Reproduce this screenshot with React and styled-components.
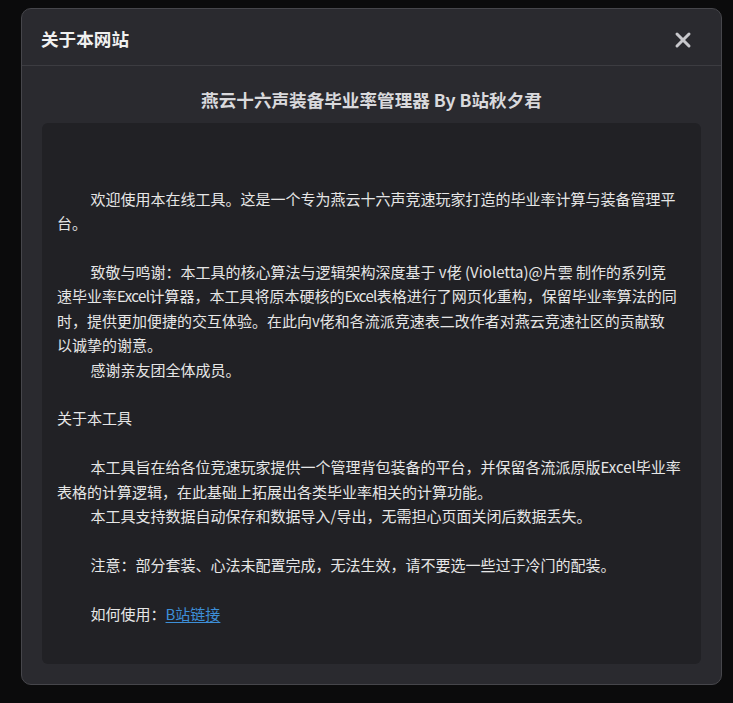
import React from "react";
import styled, { createGlobalStyle } from "styled-components";
import { X } from "lucide-react";

const GlobalStyle = createGlobalStyle`
  html, body {
    margin: 0;
    padding: 0;
    background: #0b0b0c;
  }
  body {
    font-family: "Noto Sans CJK SC", "Noto Sans", sans-serif;
    color: #e6e6e6;
  }
`;

const Backdrop = styled.div`
  min-height: 703px;
  padding: 8px 0 0 21px;
  box-sizing: border-box;
`;

const Modal = styled.div`
  width: 701px;
  box-sizing: border-box;
  background: #2a2a2f;
  border: 1px solid #46464b;
  border-radius: 10px;
  overflow: hidden;
`;

const Header = styled.div`
  height: 57px;
  display: flex;
  align-items: center;
  justify-content: space-between;
  padding: 2px 22px 0 19px;
  box-sizing: border-box;
  border-bottom: 1px solid #3c3c41;
`;

const Title = styled.h2`
  margin: 0;
  font-size: 17.6px;
  font-weight: 700;
  line-height: 27px;
  color: #f0f0f0;
`;

const CloseButton = styled.button`
  width: 32px;
  height: 32px;
  margin-top: 3px;
  display: flex;
  align-items: center;
  justify-content: center;
  padding: 0;
  border: none;
  background: transparent;
  color: #c8c8cc;
  cursor: pointer;
`;

const Body = styled.div`
  padding: 20px 20px 20px;
`;

const Subtitle = styled.h3`
  margin: 0 0 10px;
  text-align: center;
  font-size: 17.6px;
  font-weight: 700;
  line-height: 27px;
  color: #d9d9dc;
`;

const Panel = styled.div`
  background: #212125;
  border-radius: 6px;
  padding: 15px 15px 38px;
`;

const Para = styled.p`
  margin: ${(p) => (p.$gap || 0) * 24.4}px 0 0;
  font-size: 15px;
  line-height: 24.4px;
  text-indent: ${(p) => (p.$indent ? "33.5px" : "0")};
  white-space: ${(p) => (p.$lines ? "nowrap" : "normal")};
  color: #e6e6e6;
`;

const Latin = styled.span`
  letter-spacing: -0.6px;
`;

const Link = styled.a`
  color: #3d8fd8;
  text-decoration: underline;
  text-underline-offset: 2px;
`;

export default function App() {
  return (
    <>
      <GlobalStyle />
      <Backdrop>
        <Modal>
          <Header>
            <Title>关于本网站</Title>
            <CloseButton aria-label="关闭">
              <X size={24} strokeWidth={3} />
            </CloseButton>
          </Header>
          <Body>
            <Subtitle>燕云十六声装备毕业率管理器 By B站秋夕君</Subtitle>
            <Panel>
              <Para $gap={2} $indent>
                欢迎使用本在线工具。这是一个专为燕云十六声竞速玩家打造的毕业率计算与装备管理平台。
              </Para>
              <Para $gap={1} $indent $lines>
                致敬与鸣谢：本工具的核心算法与逻辑架构深度基于 v佬 (Violetta)@片雲 制作的系列竞
                <br />
                速毕业率<Latin>Excel</Latin>计算器，本工具将原本硬核的<Latin>Excel</Latin>表格进行了网页化重构，保留毕业率算法的同
                <br />
                时，提供更加便捷的交互体验。在此向v佬和各流派竞速表二改作者对燕云竞速社区的贡献致
                <br />
                以诚挚的谢意。
              </Para>
              <Para $indent>感谢亲友团全体成员。</Para>
              <Para $gap={1}>关于本工具</Para>
              <Para $gap={1} $indent>
                本工具旨在给各位竞速玩家提供一个管理背包装备的平台，并保留各流派原版Excel毕业率表格的计算逻辑，在此基础上拓展出各类毕业率相关的计算功能。
              </Para>
              <Para $indent>
                本工具支持数据自动保存和数据导入/导出，无需担心页面关闭后数据丢失。
              </Para>
              <Para $gap={1} $indent>
                注意：部分套装、心法未配置完成，无法生效，请不要选一些过于冷门的配装。
              </Para>
              <Para $gap={1} $indent>
                如何使用：<Link href="#">B站链接</Link>
              </Para>
            </Panel>
          </Body>
        </Modal>
      </Backdrop>
    </>
  );
}
